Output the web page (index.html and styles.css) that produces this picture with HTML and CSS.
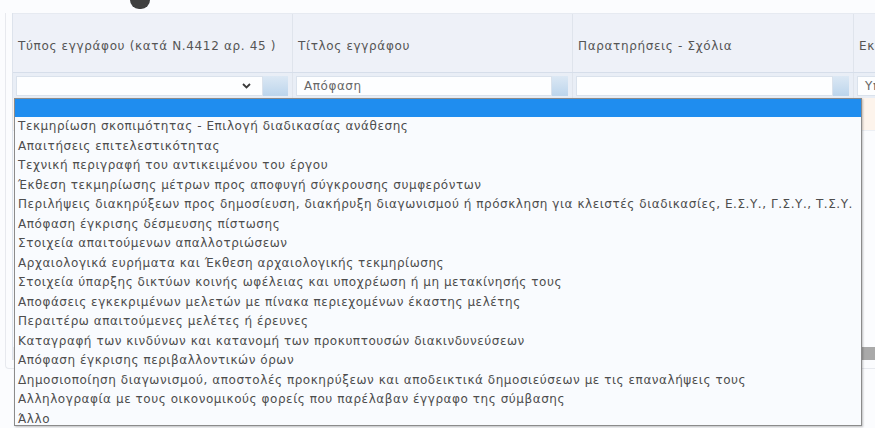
FILE: index.html
```html
<!DOCTYPE html>
<html lang="el">
<head>
<meta charset="utf-8">
<title>Έγγραφα σύμβασης</title>
<link rel="stylesheet" href="styles.css">
</head>
<body>
  <div class="toolbar"><span class="toolbar-knob"></span></div>

  <div class="panel">
    <div class="grid">
      <div class="grid-head">
        <div class="th c1">Τύπος εγγράφου (κατά Ν.4412 αρ. 45 )</div>
        <div class="th c2">Τίτλος εγγράφου</div>
        <div class="th c3">Παρατηρήσεις - Σχόλια</div>
        <div class="th c4">Εκδότης</div>
      </div>

      <div class="grid-filter">
        <div class="tf c1">
          <div class="field field-select">
            <svg class="chevron" width="9" height="6" viewBox="0 0 9 6"><path d="M1 1 L4.5 4.5 L8 1" fill="none" stroke="#3a3a3a" stroke-width="1.8"/></svg>
          </div>
          <span class="field-btn field-btn-wide"></span>
        </div>
        <div class="tf c2">
          <div class="field">Απόφαση</div>
          <span class="field-btn"></span>
        </div>
        <div class="tf c3">
          <div class="field"></div>
          <span class="field-btn"></span>
        </div>
        <div class="tf c4">
          <div class="field">Υπηρεσία</div>
        </div>
      </div>

      <div class="grid-body">
        <div class="row row-alt"></div>
      </div>

      <div class="hscroll"><span class="hscroll-thumb"></span></div>
    </div>

    <ul class="dropdown">
      <li class="opt opt-selected"></li>
      <li class="opt">Τεκμηρίωση σκοπιμότητας - Επιλογή διαδικασίας ανάθεσης</li>
      <li class="opt">Απαιτήσεις επιτελεστικότητας</li>
      <li class="opt">Τεχνική περιγραφή του αντικειμένου του έργου</li>
      <li class="opt">Έκθεση τεκμηρίωσης μέτρων προς αποφυγή σύγκρουσης συμφερόντων</li>
      <li class="opt">Περιλήψεις διακηρύξεων προς δημοσίευση, διακήρυξη διαγωνισμού ή πρόσκληση για κλειστές διαδικασίες, Ε.Σ.Υ., Γ.Σ.Υ., Τ.Σ.Υ.</li>
      <li class="opt">Απόφαση έγκρισης δέσμευσης πίστωσης</li>
      <li class="opt">Στοιχεία απαιτούμενων απαλλοτριώσεων</li>
      <li class="opt">Αρχαιολογικά ευρήματα και Έκθεση αρχαιολογικής τεκμηρίωσης</li>
      <li class="opt">Στοιχεία ύπαρξης δικτύων κοινής ωφέλειας και υποχρέωση ή μη μετακίνησής τους</li>
      <li class="opt">Αποφάσεις εγκεκριμένων μελετών με πίνακα περιεχομένων έκαστης μελέτης</li>
      <li class="opt">Περαιτέρω απαιτούμενες μελέτες ή έρευνες</li>
      <li class="opt">Καταγραφή των κινδύνων και κατανομή των προκυπτουσών διακινδυνεύσεων</li>
      <li class="opt">Απόφαση έγκρισης περιβαλλοντικών όρων</li>
      <li class="opt">Δημοσιοποίηση διαγωνισμού, αποστολές προκηρύξεων και αποδεικτικά δημοσιεύσεων με τις επαναλήψεις τους</li>
      <li class="opt">Αλληλογραφία με τους οικονομικούς φορείς που παρέλαβαν έγγραφο της σύμβασης</li>
      <li class="opt">Άλλο</li>
    </ul>
  </div>
</body>
</html>
```

FILE: styles.css
```css
html, body {
  margin: 0;
  padding: 0;
}

body {
  width: 875px;
  height: 428px;
  overflow: hidden;
  background: #fbfcfe;
  font-family: "DejaVu Sans", Verdana, sans-serif;
  font-size: 12px;
  letter-spacing: 0.55px;
  color: #505050;
}

/* strip of the toolbar above the grid */
.toolbar {
  height: 13px;
  display: flex;
  align-items: flex-start;
  padding-left: 130px;
}

.toolbar-knob {
  width: 20px;
  height: 9px;
  background: #3f3f3f;
  border-radius: 0 0 9px 9px;
}

/* outer panel holding the grid */
.panel {
  position: relative;
  margin-left: 5px;
  height: 355px;
  border-left: 1px solid #e7e9ee;
  border-bottom: 1px solid #e7e9ee;
  border-bottom-left-radius: 4px;
}

.grid {
  margin-left: 6px;
  width: 1100px;
  border-left: 1px solid #dde3ec;
}

.c1 { width: 280px; }
.c2 { width: 280px; }
.c3 { width: 281px; }
.c4 { width: 250px; }

.grid-head {
  display: flex;
  height: 60px;
  background: #eef1f8;
  border-top: 1px solid #e6eaf1;
  border-bottom: 1px solid #d6deea;
  box-sizing: border-box;
}

.th {
  display: flex;
  align-items: center;
  padding: 6px 0 0 5px;
  box-sizing: border-box;
  border-right: 1px solid #dfe4ec;
  letter-spacing: 0.65px;
  color: #555;
  white-space: nowrap;
}

.grid-filter {
  display: flex;
  height: 25px;
  background: #e9eef6;
}

.tf {
  display: flex;
  align-items: flex-start;
  padding: 3px 4px 0 3px;
  box-sizing: border-box;
  border-right: 1px solid #dfe4ec;
}

.field {
  flex: 1;
  height: 20px;
  background: #fdfeff;
  border: 1px solid #dae2ec;
  box-sizing: border-box;
  padding-left: 7px;
  line-height: 19px;
  color: #666;
  white-space: nowrap;
  overflow: hidden;
}

.field-select {
  display: flex;
  align-items: center;
  justify-content: flex-end;
  padding-right: 11px;
}

.field-btn {
  width: 16px;
  height: 20px;
  background: linear-gradient(#dce8f4, #bcd5ec);
}

.field-btn-wide {
  width: 25px;
}

.grid-body {
  height: 249px;
}

.row {
  height: 32px;
  border-bottom: 1px solid #eceff4;
}

.row-alt {
  background: #fdf4ec;
}

.hscroll {
  height: 13px;
  background: #ececec;
  display: flex;
}

.hscroll-thumb {
  margin-left: 200px;
  width: 700px;
  background: #a9a9a9;
}

/* open list of the document type select */
.dropdown {
  position: absolute;
  top: 85px;
  left: 8px;
  width: 848px;
  height: 328px;
  margin: 0;
  padding: 0;
  list-style: none;
  box-sizing: border-box;
  background: #f9fbfe;
  border: 1px solid #8b8b8b;
  box-shadow: 1px 1px 2px rgba(0, 0, 0, 0.25);
  overflow: hidden;
}

.opt {
  height: 19.5px;
  line-height: 19.5px;
  padding-left: 3px;
  white-space: nowrap;
  color: #4d4d4d;
}

.opt-selected {
  height: 18px;
  background: #1f8def;
}
```
